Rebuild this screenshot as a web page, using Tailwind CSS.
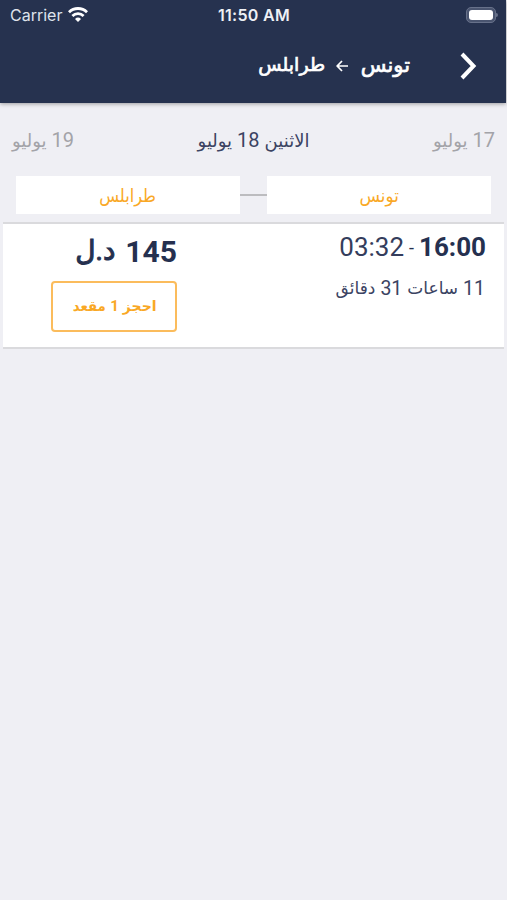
<!DOCTYPE html>
<html lang="ar" dir="rtl">
  <head>
    <meta charset="UTF-8" />
    <meta name="viewport" content="width=device-width, initial-scale=1.0" />
    <title>تونس - طرابلس</title>
    <script src="https://cdn.jsdelivr.net/npm/@tailwindcss/browser@4"></script>
  </head>
  <body
    class="bg-[#efeff4] h-[900px] overflow-hidden font-[Roboto,'DejaVu_Sans',sans-serif] text-[#25304f]"
  >
    <!-- Header -->
    <header class="h-[103px] mr-px bg-[#26324f] text-white shadow-[0_1px_4px_rgba(0,0,0,0.35)]">
      <div
        dir="ltr"
        class="grid grid-cols-3 items-center h-[29px] pl-2.5 pr-2 font-[Inter,sans-serif] text-[16px]"
      >
        <div class="flex items-center gap-1.5 text-[#dfe3ec]">
          <span>Carrier</span>
          <svg class="w-5 h-[15px]" viewBox="0 0 20 15" fill="none" stroke="white" stroke-width="2.8">
            <path d="M1 5.2a12.8 12.8 0 0 1 18 0" />
            <path d="M4.4 8.9a8 8 0 0 1 11.2 0" />
            <path d="M10 15l-3-3.1a4.3 4.3 0 0 1 6 0z" fill="white" stroke="none" />
          </svg>
        </div>
        <div class="text-center font-semibold tracking-[0.3px] whitespace-nowrap text-[#eef0f5]">11:50 AM</div>
        <div class="flex items-center justify-end">
          <div class="w-[30px] h-4 rounded-[5px] border border-[#67718a] bg-[#4a5570] p-[2px]">
            <div class="h-full rounded-[3px] bg-white"></div>
          </div>
          <div class="w-[2px] h-1 rounded-r bg-[#67718a]"></div>
        </div>
      </div>
      <div class="flex items-center h-[73px] pr-[28px]">
        <svg class="w-[18px] h-7" viewBox="0 0 18 28" fill="none" stroke="white" stroke-width="4">
          <path d="M2 2l11.5 12L2 26" />
        </svg>
        <h1 class="flex items-center mr-[50px] text-[19px] whitespace-nowrap [-webkit-text-stroke:0.7px_white]">
          <span class="w-[51px] text-[21px]">تونس</span>
          <svg class="w-3 h-3 mx-[11px]" viewBox="0 0 12 12" fill="none" stroke="white" stroke-width="1.7">
            <path d="M12 6H1.5M6 1L1.2 6L6 11" />
          </svg>
          <span>طرابلس</span>
        </h1>
      </div>
    </header>

    <!-- Days -->
    <nav class="flex items-center justify-between h-[73px] px-3 text-[20px] whitespace-nowrap">
      <span class="text-[#a3a3a8]">17 <span class="text-[18px]">يوليو</span></span>
      <span class="text-[#3b4362]"><span class="text-[18px]">الاثنين</span> 18 <span class="text-[18px]">يوليو</span></span>
      <span class="text-[#a3a3a8]">19 <span class="text-[18px]">يوليو</span></span>
    </nav>

    <!-- Cities -->
    <div class="flex items-center px-4 text-[18px] text-[#f9a825]">
      <div class="w-[224px] h-[38px] bg-white flex items-center justify-center">
        <span class="scale-x-93">تونس</span>
      </div>
      <div class="flex-1 h-[2px] bg-[#bcbcbf]"></div>
      <div class="w-[224px] h-[38px] bg-white flex items-center justify-center">
        <span class="scale-x-90">طرابلس</span>
      </div>
    </div>

    <!-- Trip -->
    <section
      class="flex justify-between mt-2 mr-[3px] ml-[3px] h-[127px] bg-white border-y-2 border-[#dadadd]"
    >
      <div class="pr-[18px] whitespace-nowrap">
        <div class="flex items-center gap-[5px] mt-[3px] h-10 text-[26px]">
          <span class="font-bold">16:00</span>
          <span class="text-[18px]">-</span>
          <span class="text-[#343d5c]">03:32</span>
        </div>
        <div class="flex items-center gap-[5px] pr-px h-11 text-[19.5px] text-[#3b4362]">
          <span>11</span>
          <span class="text-[17px]">ساعات</span>
          <span>31</span>
          <span class="text-[17px]">دقائق</span>
        </div>
      </div>
      <div class="w-[126px] ml-12 whitespace-nowrap">
        <div class="flex items-center gap-2.5 mt-[7px] h-10 text-[30px] font-bold">
          <span>145</span>
          <span class="text-[28px] font-normal [-webkit-text-stroke:1px_#25304f]">د.ل</span>
        </div>
        <button
          class="flex items-center justify-center gap-1 mt-[10px] w-[126px] h-[51px] rounded border-2 border-[#fbbc5c] text-[#f9a825] text-[14px] font-bold"
        >
          <span>احجز</span>
          <span class="text-[15px]">1</span>
          <span class="scale-x-95 origin-right">مقعد</span>
        </button>
      </div>
    </section>
  </body>
</html>
